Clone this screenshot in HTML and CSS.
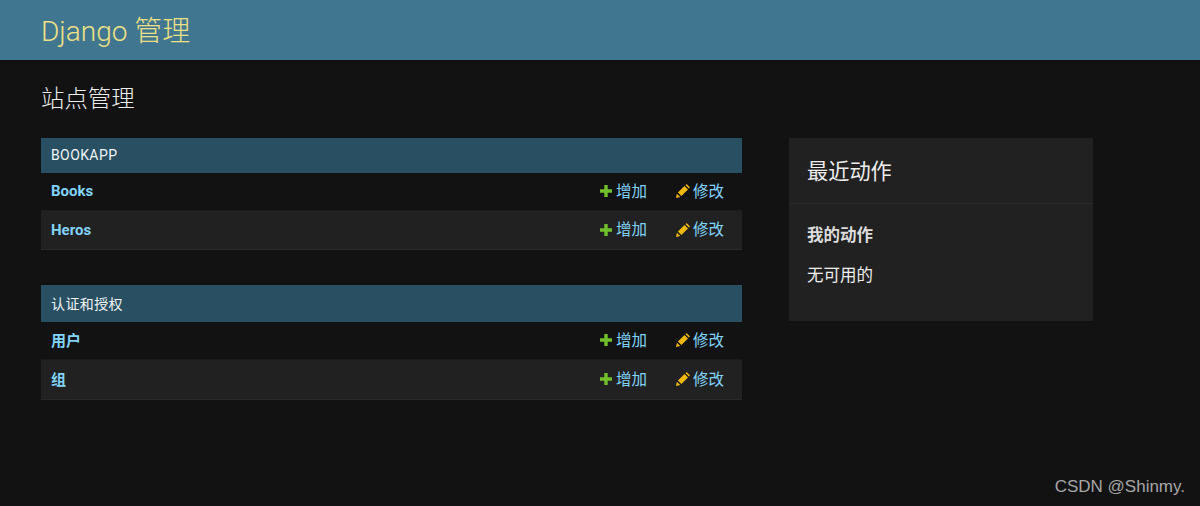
FILE: index.html
```html
<!DOCTYPE html>
<html lang="zh-CN">
<head>
<meta charset="utf-8">
<title>Django 管理</title>
<link rel="stylesheet" href="styles.css">
</head>
<body>
<header class="site-header"><h1 class="brand">Django 管理</h1></header>
<main class="content">
  <h2 class="page-title">站点管理</h2>
  <div class="columns">
    <div class="apps">
      <section class="app">
        <div class="app-caption">BOOKAPP</div>
        <div class="row"><a class="model">Books</a><span class="action add"><svg class="icon" viewBox="0 0 12 12"><path d="M4.3 0h3.4v4.3H12v3.4H7.7V12H4.3V7.7H0V4.3h4.3z"/></svg>增加</span><span class="action change"><svg class="icon" viewBox="0 0 14 14"><path d="M0 14l0.9-4.2 3.3 3.3zM1.9 8.6l6.6-6.6 3.5 3.5-6.6 6.6zM9.4 1.1l0.7-0.7q0.5-0.4 1 0l2.5 2.5q0.4 0.5 0 1l-0.7 0.7z"/></svg>修改</span></div>
        <div class="row alt"><a class="model">Heros</a><span class="action add"><svg class="icon" viewBox="0 0 12 12"><path d="M4.3 0h3.4v4.3H12v3.4H7.7V12H4.3V7.7H0V4.3h4.3z"/></svg>增加</span><span class="action change"><svg class="icon" viewBox="0 0 14 14"><path d="M0 14l0.9-4.2 3.3 3.3zM1.9 8.6l6.6-6.6 3.5 3.5-6.6 6.6zM9.4 1.1l0.7-0.7q0.5-0.4 1 0l2.5 2.5q0.4 0.5 0 1l-0.7 0.7z"/></svg>修改</span></div>
      </section>
      <section class="app">
        <div class="app-caption">认证和授权</div>
        <div class="row"><a class="model">用户</a><span class="action add"><svg class="icon" viewBox="0 0 12 12"><path d="M4.3 0h3.4v4.3H12v3.4H7.7V12H4.3V7.7H0V4.3h4.3z"/></svg>增加</span><span class="action change"><svg class="icon" viewBox="0 0 14 14"><path d="M0 14l0.9-4.2 3.3 3.3zM1.9 8.6l6.6-6.6 3.5 3.5-6.6 6.6zM9.4 1.1l0.7-0.7q0.5-0.4 1 0l2.5 2.5q0.4 0.5 0 1l-0.7 0.7z"/></svg>修改</span></div>
        <div class="row alt"><a class="model">组</a><span class="action add"><svg class="icon" viewBox="0 0 12 12"><path d="M4.3 0h3.4v4.3H12v3.4H7.7V12H4.3V7.7H0V4.3h4.3z"/></svg>增加</span><span class="action change"><svg class="icon" viewBox="0 0 14 14"><path d="M0 14l0.9-4.2 3.3 3.3zM1.9 8.6l6.6-6.6 3.5 3.5-6.6 6.6zM9.4 1.1l0.7-0.7q0.5-0.4 1 0l2.5 2.5q0.4 0.5 0 1l-0.7 0.7z"/></svg>修改</span></div>
      </section>
    </div>
    <aside class="recent">
      <h3 class="recent-title">最近动作</h3>
      <div class="recent-body">
        <h4 class="recent-sub">我的动作</h4>
        <p class="recent-empty">无可用的</p>
      </div>
    </aside>
  </div>
</main>
<div class="watermark">CSDN @Shinmy.</div>
</body>
</html>
```
FILE: styles.css
```css
* { box-sizing: border-box; }
html, body { height: 100%; }
body {
  margin: 0;
  background: #121212;
  color: #eeeeee;
  font-family: Roboto, "Noto Sans CJK SC", sans-serif;
  overflow: hidden;
  position: relative;
}
.site-header {
  height: 60px;
  background: #417690;
  padding: 3px 41px 0;
  display: flex;
  align-items: center;
}
.brand {
  margin: 0;
  font-size: 28px;
  font-weight: 300;
  color: #eee084;
  line-height: 1;
}
.content { padding: 0 41px; }
.page-title {
  margin: 0;
  padding-top: 25px;
  height: 78px;
  font-size: 23.4px;
  font-weight: 300;
  line-height: 28px;
  color: #eeeeee;
}
.columns { display: flex; align-items: flex-start; gap: 47px; }
.apps { width: 701px; display: flex; flex-direction: column; gap: 35px; }
.app-caption {
  height: 35px;
  background: #284f62;
  padding: 0 0 2px 10px;
  display: flex;
  align-items: center;
  font-size: 14px;
  letter-spacing: 0.4px;
  color: #f2f5f7;
}
.app + .app .app-caption { height: 37px; }
.row {
  height: 38px;
  padding: 0 18px 1px 10px;
  display: flex;
  align-items: center;
  font-size: 15.5px;
  white-space: nowrap;
  border-bottom: 1px solid #1c1c1c;
}
.row.alt { height: 39px; background: #212121; border-bottom-color: #2a2a2a; }
.app + .app .row.alt { height: 40px; }
.model { font-weight: 700; font-size: 15px; color: #81d4fa; margin-right: auto; }
.app + .app .model { margin-bottom: 2px; }
.action { display: flex; align-items: center; color: #81d4fa; line-height: 1; padding-top: 3px; }
.add { width: 76px; }
.change { width: 48px; }
.icon { flex: none; width: 12px; height: 12px; margin: -3px 4px 0 0; }
.add .icon { fill: #70bf2b; }
.change .icon { width: 14px; height: 14px; margin-right: 3px; fill: #efb80b; }
.recent { width: 304px; height: 183px; background: #212121; }
.recent-title {
  margin: 0;
  height: 66px;
  padding: 20px 18px 0;
  font-size: 21.2px;
  line-height: 28px;
  font-weight: 400;
  color: #eeeeee;
  border-bottom: 1px solid #2a2a2a;
}
.recent-body { padding: 21px 18px 0; }
.recent-sub { margin: 0; font-size: 16.5px; font-weight: 700; line-height: 22px; color: #dddddd; }
.recent-empty { margin: 18px 0 0; font-size: 16.5px; line-height: 22px; color: #eeeeee; }
.watermark {
  position: absolute;
  right: 15px;
  bottom: 8px;
  font-family: "Liberation Sans", sans-serif;
  font-size: 17px;
  line-height: 22px;
  color: #a6a6a6;
}
```
